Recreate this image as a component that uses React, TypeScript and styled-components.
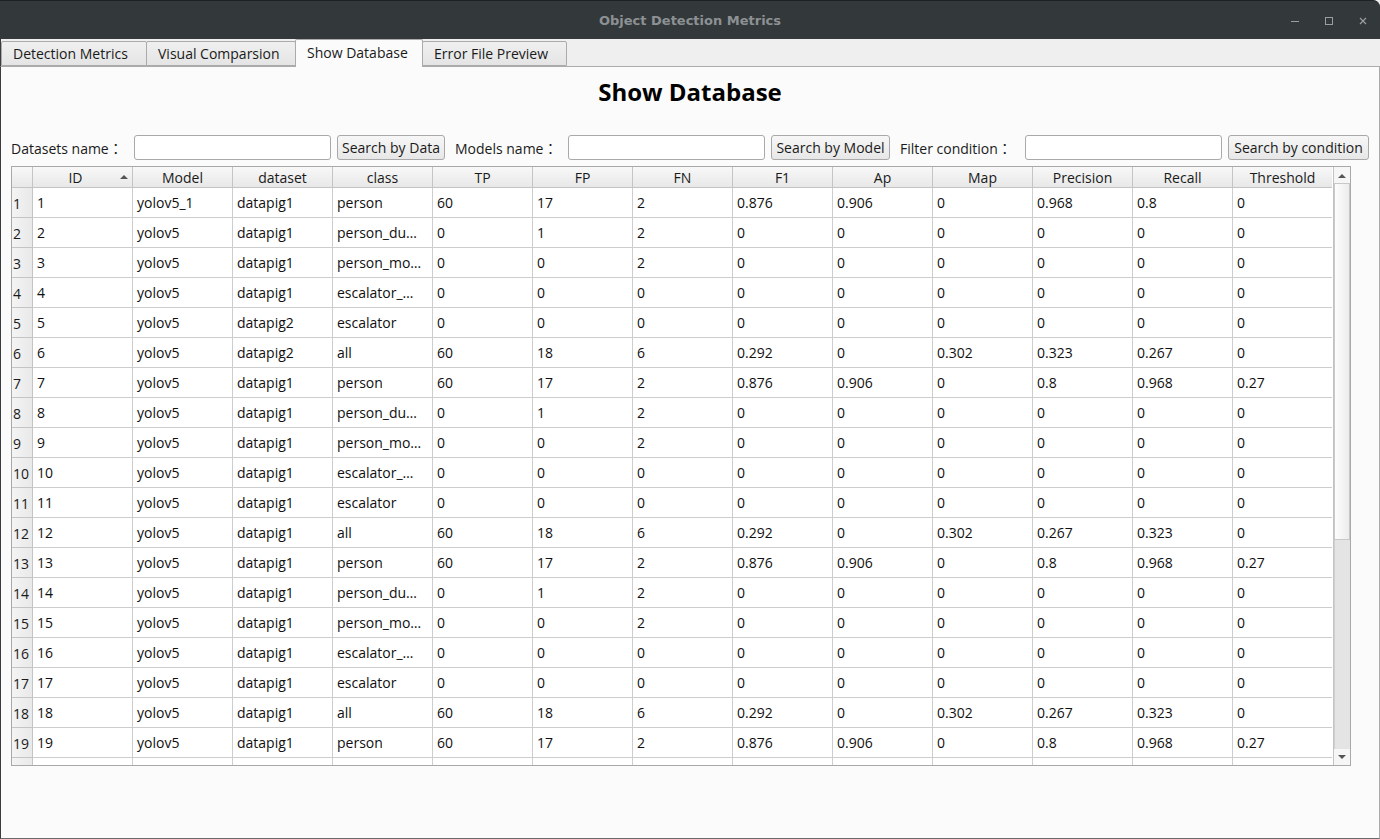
import React from 'react';
import styled, { createGlobalStyle } from 'styled-components';

const GlobalStyle = createGlobalStyle`
  html, body {
    margin: 0;
    padding: 0;
    background: #fbfbfb;
  }
  body {
    font-family: 'Open Sans', 'Noto Sans', 'Noto Sans CJK JP', sans-serif;
    font-size: 14px;
    color: #101010;
  }
`;

type Row = string[];

const columns = ['ID', 'Model', 'dataset', 'class', 'TP', 'FP', 'FN', 'F1', 'Ap', 'Map', 'Precision', 'Recall', 'Threshold'];

const rows: Row[] = [
  ['1', 'yolov5_1', 'datapig1', 'person', '60', '17', '2', '0.876', '0.906', '0', '0.968', '0.8', '0'],
  ['2', 'yolov5', 'datapig1', 'person_du…', '0', '1', '2', '0', '0', '0', '0', '0', '0'],
  ['3', 'yolov5', 'datapig1', 'person_mo…', '0', '0', '2', '0', '0', '0', '0', '0', '0'],
  ['4', 'yolov5', 'datapig1', 'escalator_…', '0', '0', '0', '0', '0', '0', '0', '0', '0'],
  ['5', 'yolov5', 'datapig2', 'escalator', '0', '0', '0', '0', '0', '0', '0', '0', '0'],
  ['6', 'yolov5', 'datapig2', 'all', '60', '18', '6', '0.292', '0', '0.302', '0.323', '0.267', '0'],
  ['7', 'yolov5', 'datapig1', 'person', '60', '17', '2', '0.876', '0.906', '0', '0.8', '0.968', '0.27'],
  ['8', 'yolov5', 'datapig1', 'person_du…', '0', '1', '2', '0', '0', '0', '0', '0', '0'],
  ['9', 'yolov5', 'datapig1', 'person_mo…', '0', '0', '2', '0', '0', '0', '0', '0', '0'],
  ['10', 'yolov5', 'datapig1', 'escalator_…', '0', '0', '0', '0', '0', '0', '0', '0', '0'],
  ['11', 'yolov5', 'datapig1', 'escalator', '0', '0', '0', '0', '0', '0', '0', '0', '0'],
  ['12', 'yolov5', 'datapig1', 'all', '60', '18', '6', '0.292', '0', '0.302', '0.267', '0.323', '0'],
  ['13', 'yolov5', 'datapig1', 'person', '60', '17', '2', '0.876', '0.906', '0', '0.8', '0.968', '0.27'],
  ['14', 'yolov5', 'datapig1', 'person_du…', '0', '1', '2', '0', '0', '0', '0', '0', '0'],
  ['15', 'yolov5', 'datapig1', 'person_mo…', '0', '0', '2', '0', '0', '0', '0', '0', '0'],
  ['16', 'yolov5', 'datapig1', 'escalator_…', '0', '0', '0', '0', '0', '0', '0', '0', '0'],
  ['17', 'yolov5', 'datapig1', 'escalator', '0', '0', '0', '0', '0', '0', '0', '0', '0'],
  ['18', 'yolov5', 'datapig1', 'all', '60', '18', '6', '0.292', '0', '0.302', '0.267', '0.323', '0'],
  ['19', 'yolov5', 'datapig1', 'person', '60', '17', '2', '0.876', '0.906', '0', '0.8', '0.968', '0.27'],
  ['', '', '', '', '', '', '', '', '', '', '', '', ''],
];

const tabs = [
  { label: 'Detection Metrics', width: 146 },
  { label: 'Visual Comparsion', width: 150 },
  { label: 'Show Database', width: 128, active: true },
  { label: 'Error File Preview', width: 145 },
];

const searches = [
  { label: 'Datasets name', labelWidth: 123, button: 'Search by Data', buttonWidth: 108 },
  { label: 'Models name', labelWidth: 113, button: 'Search by Model', buttonWidth: 119 },
  { label: 'Filter condition', labelWidth: 125, button: 'Search by condition', buttonWidth: 141 },
];

const App: React.FC = () => {
  return (
    <>
      <GlobalStyle />
      <Window>
        <TitleBar>
          <Title>Object Detection Metrics</Title>
          <Controls>
            <svg width="10" height="10" viewBox="0 0 10 10">
              <line x1="1" y1="5.5" x2="9" y2="5.5" stroke="#9b9d9e" strokeWidth="1" />
            </svg>
            <svg width="10" height="10" viewBox="0 0 10 10">
              <rect x="1.5" y="1.5" width="7" height="7" fill="none" stroke="#9b9d9e" strokeWidth="1" />
            </svg>
            <svg width="10" height="10" viewBox="0 0 10 10">
              <path d="M2 2 L8 8 M8 2 L2 8" stroke="#9b9d9e" strokeWidth="1.2" />
            </svg>
          </Controls>
        </TitleBar>
        <TabBar>
          {tabs.map((t) => (
            <Tab key={t.label} $width={t.width} $active={!!t.active}>
              {t.label}
            </Tab>
          ))}
        </TabBar>
        <Pane>
          <Heading>Show Database</Heading>
          <SearchRow>
            {searches.map((s) => (
              <SearchGroup key={s.label}>
                <Label $width={s.labelWidth}>
                  {s.label}
                  <Colon>：</Colon>
                </Label>
                <Input />
                <Button $width={s.buttonWidth}>{s.button}</Button>
              </SearchGroup>
            ))}
          </SearchRow>
          <TableFrame>
            <Grid>
              <Corner />
              {columns.map((c, i) => (
                <HeaderCell key={c} $sorted={i === 0}>
                  {c}
                  {i === 0 && <SortArrow />}
                </HeaderCell>
              ))}
              {rows.map((r, ri) => (
                <React.Fragment key={ri}>
                  <RowHeader>{r[0]}</RowHeader>
                  {r.map((v, ci) => (
                    <Cell key={ci}>{v}</Cell>
                  ))}
                </React.Fragment>
              ))}
            </Grid>
            <ScrollBar>
              <ArrowButton>
                <svg width="8" height="5" viewBox="0 0 8 5">
                  <path d="M0 5 L4 1 L8 5 Z" fill="#555" />
                </svg>
              </ArrowButton>
              <Handle />
              <Track />
              <ArrowButton>
                <svg width="8" height="5" viewBox="0 0 8 5">
                  <path d="M0 0 L4 4 L8 0 Z" fill="#555" />
                </svg>
              </ArrowButton>
            </ScrollBar>
          </TableFrame>
        </Pane>
      </Window>
    </>
  );
};
export default App;

const Window = styled.div`
  width: 1380px;
  height: 839px;
  display: flex;
  flex-direction: column;
  overflow: hidden;
  background: #efefef;
`;

const TitleBar = styled.div`
  height: 38px;
  flex-shrink: 0;
  background: #33383b;
  border-top: 1px solid #1f2224;
  border-radius: 0 7px 0 0;
  position: relative;
  display: flex;
  align-items: center;
  justify-content: center;
`;

const Title = styled.span`
  color: #8d9194;
  font-weight: 700;
  font-size: 13px;
  font-family: 'DejaVu Sans', 'Open Sans', sans-serif;
`;

const Controls = styled.div`
  position: absolute;
  right: 12px;
  top: 15px;
  display: flex;
  gap: 24px;
`;

const TabBar = styled.div`
  height: 27px;
  flex-shrink: 0;
  display: flex;
  align-items: flex-end;
  padding-left: 1px;
  background: #efefef;
  border-left: 1px solid #3a3d3f;
  position: relative;
  z-index: 1;
`;

const Tab = styled.div<{ $width: number; $active: boolean }>`
  box-sizing: border-box;
  width: ${(p) => p.$width}px;
  height: ${(p) => (p.$active ? 28 : 25)}px;
  margin-bottom: ${(p) => (p.$active ? -1 : 0)}px;
  margin-left: -1px;
  display: flex;
  align-items: center;
  padding: 0 0 ${(p) => (p.$active ? 2 : 0)}px 11px;
  border: 1px solid #ababab;
  border-bottom: ${(p) => (p.$active ? 'none' : '1px solid #ababab')};
  border-radius: 2px 2px 0 0;
  background: ${(p) => (p.$active ? '#fbfbfb' : 'linear-gradient(#f0f0f0, #e4e4e4)')};
  color: #1a1a1a;
  font-size: 14px;
  white-space: nowrap;
`;

const Pane = styled.div`
  flex: 1;
  background: #fbfbfb;
  border-top: 1px solid #ababab;
  border-left: 1px solid #3a3d3f;
  border-right: 1px solid #ababab;
  border-bottom: 1px solid #6a6a6a;
  display: flex;
  flex-direction: column;
  padding: 0 0 0 10px;
`;

const Heading = styled.h1`
  margin: 8px 0 0 -10px;
  height: 33px;
  text-align: center;
  font-size: 24px;
  font-weight: 700;
  color: #000;
  line-height: 33px;
`;

const SearchRow = styled.div`
  display: flex;
  margin-top: 27px;
  height: 25px;
  gap: 10px;
`;

const SearchGroup = styled.div`
  display: flex;
  align-items: center;
`;

const Label = styled.span<{ $width: number }>`
  width: ${(p) => p.$width}px;
  white-space: nowrap;
  font-size: 14px;
  color: #1a1a1a;
  padding-top: 1px;
`;

const Colon = styled.span`
  font-family: 'Noto Sans CJK JP', 'Noto Sans CJK SC', sans-serif;
  font-size: 14px;
`;

const Input = styled.div`
  box-sizing: border-box;
  width: 197px;
  height: 25px;
  border: 1px solid #a9a9a9;
  border-radius: 3px;
  background: #fff;
  margin-right: 6px;
`;

const Button = styled.div<{ $width: number }>`
  box-sizing: border-box;
  width: ${(p) => p.$width}px;
  height: 25px;
  border: 1px solid #a9a9a9;
  border-radius: 3px;
  background: linear-gradient(#f7f7f7, #e7e7e7);
  display: flex;
  align-items: center;
  justify-content: center;
  font-size: 14px;
  color: #1a1a1a;
  white-space: nowrap;
`;

const TableFrame = styled.div`
  margin-top: 6px;
  width: 1340px;
  height: 600px;
  box-sizing: border-box;
  border: 1px solid #a9a9a9;
  background: #fff;
  display: flex;
  overflow: hidden;
`;

const Grid = styled.div`
  display: grid;
  grid-template-columns: 21px repeat(13, 100px);
  grid-template-rows: 21px;
  grid-auto-rows: 30px;
  align-content: start;
  overflow: hidden;
`;

const Corner = styled.div`
  background: linear-gradient(#f8f8f8, #e8e8e8);
  border-right: 1px solid #c4c4c4;
  border-bottom: 1px solid #c4c4c4;
`;

const HeaderCell = styled.div<{ $sorted: boolean }>`
  position: relative;
  background: linear-gradient(#f8f8f8, #e8e8e8);
  border-right: 1px solid #c4c4c4;
  border-bottom: 1px solid #c4c4c4;
  display: flex;
  align-items: center;
  justify-content: center;
  padding-right: ${(p) => (p.$sorted ? 14 : 0)}px;
  font-size: 14px;
  color: #1a1a1a;
`;

const SortArrow = styled.span`
  position: absolute;
  right: 4px;
  top: 8px;
  width: 0;
  height: 0;
  border-left: 4px solid transparent;
  border-right: 4px solid transparent;
  border-bottom: 4px solid #555;
`;

const RowHeader = styled.div`
  background: linear-gradient(90deg, #f4f4f4, #e9e9e9);
  border-right: 1px solid #c4c4c4;
  border-bottom: 1px solid #c4c4c4;
  display: flex;
  align-items: center;
  padding: 1px 0 0 1px;
  font-size: 14px;
  color: #1a1a1a;
  overflow: hidden;
  white-space: nowrap;
`;

const Cell = styled.div`
  border-right: 1px solid #cdcdcd;
  border-bottom: 1px solid #cdcdcd;
  display: flex;
  align-items: center;
  padding: 0 0 0 4px;
  font-size: 14px;
  color: #101010;
  white-space: nowrap;
  overflow: hidden;
`;

const ScrollBar = styled.div`
  width: 16px;
  margin-left: 1px;
  border-left: 1px solid #c4c4c4;
  display: flex;
  flex-direction: column;
  background: #fafafa;
`;

const ArrowButton = styled.div`
  height: 16px;
  flex-shrink: 0;
  display: flex;
  align-items: center;
  justify-content: center;
  background: #f6f6f6;
`;

const Handle = styled.div`
  height: 357px;
  flex-shrink: 0;
  box-sizing: border-box;
  border: 1px solid #c8c8c8;
  background: linear-gradient(90deg, #fdfdfd, #ececec);
`;

const Track = styled.div`
  flex: 1;
  background: #e4e4e4;
  border-left: 1px solid #cfcfcf;
`;
